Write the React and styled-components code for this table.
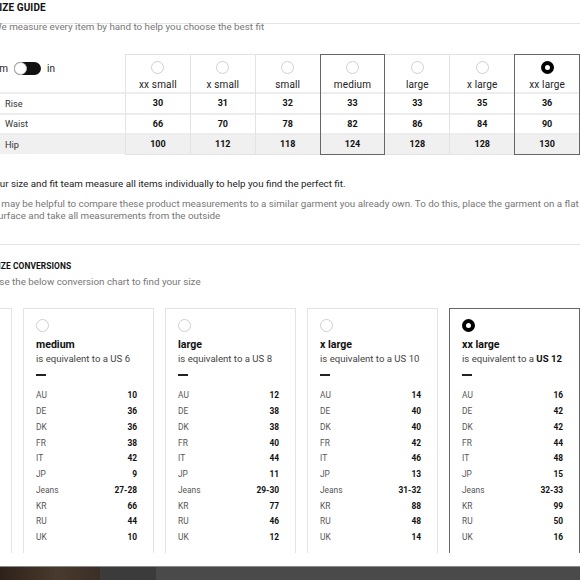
import React from 'react';
import styled, { createGlobalStyle } from 'styled-components';

const GlobalStyle = createGlobalStyle`
  html, body {
    margin: 0;
    padding: 0;
    background: #ffffff;
    overflow: hidden;
  }
  body {
    font-family: Roboto, "Liberation Sans", Arial, sans-serif;
    color: #222;
  }
`;

const Page = styled.div`
  width: 587px;
  height: 580px;
  margin-left: -7px;
  display: flex;
  flex-direction: column;
  overflow: hidden;
`;

const Section = styled.section`
  border-top: ${(p) => (p.divided ? '1px solid #e4e4e4' : 'none')};
  padding-top: ${(p) => p.top || 0}px;
  padding-bottom: ${(p) => p.bottom || 0}px;
`;

const Heading = styled.h2`
  margin: 0;
  font-size: ${(p) => p.size || 10}px;
  font-weight: 700;
  letter-spacing: 0.1px;
  line-height: 14px;
  color: #111;
  padding-top: ${(p) => p.top || 0}px;
  padding-bottom: ${(p) => p.bottom || 0}px;
  border-bottom: ${(p) => (p.underline ? '1px solid #e4e4e4' : 'none')};
`;

const Lead = styled.p`
  margin: 0;
  font-size: 9.8px;
  line-height: 12px;
  color: ${(p) => (p.dark ? '#222' : '#777')};
  margin-top: ${(p) => p.top || 0}px;
`;

/* size table */

const Table = styled.div`
  display: flex;
  margin-top: 21px;
`;

const LabelColumn = styled.div`
  width: 132px;
  flex-shrink: 0;
  display: flex;
  flex-direction: column;
`;

const SizeColumn = styled.div`
  flex: 1;
  display: flex;
  flex-direction: column;
  border: 1px solid ${(p) => (p.selected ? '#666' : '#e3e3e3')};
  border-right: ${(p) => (p.selected ? '1px solid #666' : 'none')};
  margin-right: ${(p) => (p.selected ? '-1px' : '0')};
  position: relative;
  z-index: ${(p) => (p.selected ? 1 : 0)};
  &:last-child {
    margin-right: 0;
    border-right: 1px solid ${(p) => (p.selected ? '#666' : '#e3e3e3')};
  }
`;

const HeadCell = styled.div`
  height: 37px;
  display: flex;
  flex-direction: column;
  align-items: center;
  padding-top: 6px;
  box-sizing: border-box;
`;

const UnitCell = styled.div`
  height: 38px;
  display: flex;
  align-items: center;
  padding: 0 0 10px 1px;
  box-sizing: border-box;
  gap: 6px;
  font-size: 10px;
  color: #222;
`;

const SizeName = styled.div`
  margin-top: 5px;
  font-size: 10px;
  letter-spacing: 0.15px;
  color: #222;
`;

const Cell = styled.div`
  height: 20.5px;
  display: flex;
  align-items: center;
  justify-content: ${(p) => (p.label ? 'flex-start' : 'center')};
  padding-left: ${(p) => (p.label ? '12px' : '0')};
  border-top: 2px solid #ededed;
  background: ${(p) => (p.shaded ? '#f0f0f0' : '#fff')};
  font-size: ${(p) => (p.label ? '9.2px' : '9px')};
  font-weight: ${(p) => (p.label ? 400 : 700)};
  color: ${(p) => (p.label ? '#333' : '#111')};
  box-sizing: border-box;
`;

const Radio = styled.span`
  display: block;
  width: 13px;
  height: 13px;
  border-radius: 50%;
  box-sizing: border-box;
  border: ${(p) => (p.checked ? '4px solid #000' : '1px solid #cfcfcf')};
  background: #fff;
  flex-shrink: 0;
`;

const Switch = styled.span`
  width: 27px;
  height: 13px;
  border-radius: 7px;
  background: #111;
  position: relative;
  &::after {
    content: '';
    position: absolute;
    left: 0;
    top: 0;
    width: 13px;
    height: 13px;
    border-radius: 50%;
    background: #fff;
    border: 1px solid #bbb;
    box-sizing: border-box;
  }
`;

/* conversion cards */

const CardStrip = styled.div`
  margin-top: 20px;
  height: 245px;
  display: flex;
  justify-content: flex-end;
  gap: 11px;
  overflow: hidden;
`;

const Card = styled.div`
  width: 131px;
  height: 270px;
  flex-shrink: 0;
  box-sizing: border-box;
  border: 1px solid ${(p) => (p.selected ? '#666' : '#e3e3e3')};
  padding: 10px 16px 0 12px;
  display: flex;
  flex-direction: column;
`;

const CardTitle = styled.div`
  margin-top: 6px;
  font-size: 10.6px;
  font-weight: 700;
  color: #111;
  line-height: 14px;
`;

const Equivalent = styled.div`
  font-size: 9.6px;
  color: #444;
  line-height: 13px;
  white-space: nowrap;
  b {
    color: #111;
  }
`;

const Dash = styled.span`
  display: block;
  width: 10px;
  height: 2px;
  background: #222;
  margin: 9px 0 12px;
`;

const ConvRow = styled.div`
  display: flex;
  justify-content: space-between;
  align-items: center;
  height: 15.75px;
  font-size: 8.4px;
`;

const ConvLabel = styled.span`
  color: #555;
`;

const ConvValue = styled.span`
  font-weight: 700;
  color: #111;
`;

const Footer = styled.div`
  margin-top: auto;
  height: 13px;
  border-top: 1px solid #8a8a8a;
  display: flex;
`;

const FooterPart = styled.div`
  width: ${(p) => p.w || 'auto'};
  flex: ${(p) => (p.grow ? 1 : 'none')};
  background: ${(p) => p.bg};
`;

const sizes = ['xx small', 'x small', 'small', 'medium', 'large', 'x large', 'xx large'];
const selectedSize = 'xx large';
const measures = [
  { name: 'Rise', values: [30, 31, 32, 33, 33, 35, 36] },
  { name: 'Waist', values: [66, 70, 78, 82, 86, 84, 90] },
  { name: 'Hip', values: [100, 112, 118, 124, 128, 128, 130], shaded: true },
];

const countries = ['AU', 'DE', 'DK', 'FR', 'IT', 'JP', 'Jeans', 'KR', 'RU', 'UK'];
const conversions = [
  { size: 'xx small', us: '0', values: ['4', '30', '30', '32', '36', '3', '23-24', '44', '38', '4'] },
  { size: 'x small', us: '2', values: ['6', '32', '32', '34', '38', '5', '24-25', '55', '40', '6'] },
  { size: 'small', us: '4', values: ['8', '34', '34', '36', '40', '7', '25-26', '55', '42', '8'] },
  { size: 'medium', us: '6', values: ['10', '36', '36', '38', '42', '9', '27-28', '66', '44', '10'] },
  { size: 'large', us: '8', values: ['12', '38', '38', '40', '44', '11', '29-30', '77', '46', '12'] },
  { size: 'x large', us: '10', values: ['14', '40', '40', '42', '46', '13', '31-32', '88', '48', '14'] },
  { size: 'xx large', us: '12', values: ['16', '42', '42', '44', '48', '15', '32-33', '99', '50', '16'] },
];

export default function App() {
  return (
    <Page>
      <GlobalStyle />
      <Section bottom={22}>
        <Heading underline top={1} bottom={8}>SIZE GUIDE</Heading>
        <Lead top={-3}>We measure every item by hand to help you choose the best fit</Lead>

        <Table>
          <LabelColumn>
            <UnitCell>
              <span>cm</span>
              <Switch />
              <span>in</span>
            </UnitCell>
            {measures.map((m) => (
              <Cell key={m.name} label shaded={m.shaded}>{m.name}</Cell>
            ))}
          </LabelColumn>
          {sizes.map((s, i) => (
            <SizeColumn key={s} selected={s === 'medium' || s === selectedSize}>
              <HeadCell>
                <Radio checked={s === selectedSize} />
                <SizeName>{s}</SizeName>
              </HeadCell>
              {measures.map((m) => (
                <Cell key={m.name} shaded={m.shaded}>{m.values[i]}</Cell>
              ))}
            </SizeColumn>
          ))}
        </Table>

        <Lead dark top={23}>Our size and fit team measure all items individually to help you find the perfect fit.</Lead>
        <Lead top={8}>
          It may be helpful to compare these product measurements to a similar garment you already own. To do this, place the garment on a flat surface and take all measurements from the outside
        </Lead>
      </Section>

      <Section divided top={14}>
        <Heading size={8.4}>SIZE CONVERSIONS</Heading>
        <Lead top={3}>Use the below conversion chart to find your size</Lead>
        <CardStrip>
          {conversions.map((c) => {
            const selected = c.size === selectedSize;
            return (
              <Card key={c.size} selected={selected}>
                <Radio checked={selected} />
                <CardTitle>{c.size}</CardTitle>
                <Equivalent>
                  is equivalent to a {selected ? <b>US {c.us}</b> : `US ${c.us}`}
                </Equivalent>
                <Dash />
                {countries.map((country, i) => (
                  <ConvRow key={country}>
                    <ConvLabel>{country}</ConvLabel>
                    <ConvValue>{c.values[i]}</ConvValue>
                  </ConvRow>
                ))}
              </Card>
            );
          })}
        </CardStrip>
      </Section>

      <Footer>
        <FooterPart w="107px" bg="linear-gradient(90deg, #2a1e17 0%, #4a3a2e 60%, #3a2e26 100%)" />
        <FooterPart w="56px" bg="#3b3b3b" />
        <FooterPart grow bg="#4a4a4a" />
      </Footer>
    </Page>
  );
}
